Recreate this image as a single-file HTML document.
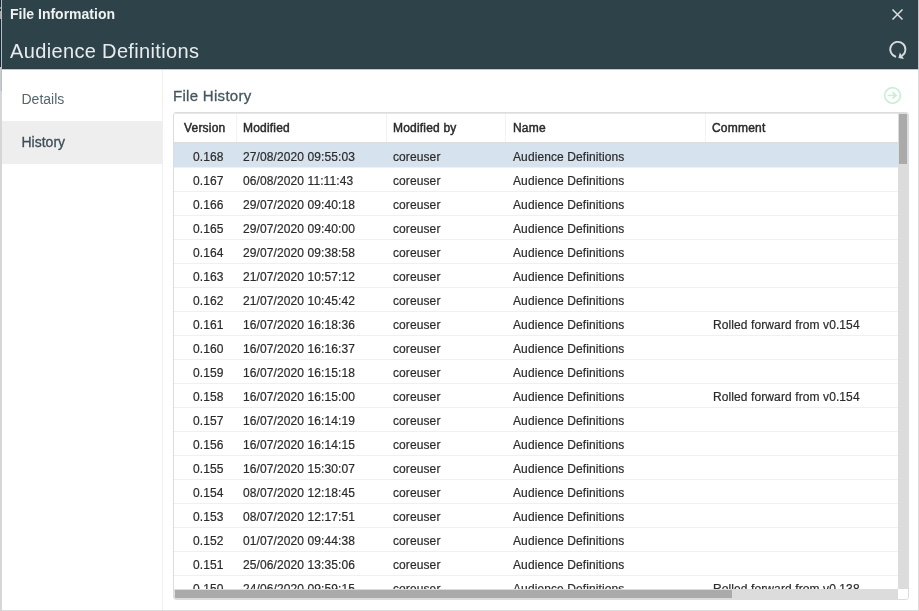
<!DOCTYPE html>
<html><head><meta charset="utf-8">
<style>
*{box-sizing:border-box;margin:0;padding:0}
html,body{width:919px;height:611px;overflow:hidden;background:#fff;font-family:"Liberation Sans",sans-serif}
#dlg{will-change:transform}
#bgcol{position:absolute;left:0;top:0;width:2px;height:611px;background:#d6d6d6}
#bgcol .a{position:absolute;left:0;top:0;width:1px;height:67px;background:#1c2b33}
#bgcol .p{position:absolute;left:0;top:11px;width:1px;height:8px;background:#a0a6a9}
#bgcol .q{position:absolute;left:0;top:7px;width:1px;height:2px;background:#8c9498}
#bgcol .b{position:absolute;left:0;top:67px;width:1px;height:24px;background:#c6ccd2}
#rb{position:absolute;left:918px;top:0;width:1px;height:70px;background:#c2c7ca}
#bgcol .c{position:absolute;left:1px;top:0;width:1px;height:91px;background:#b9bec1}
#dlg{position:absolute;left:1px;top:0;width:918px;height:611px;border:1px solid #dcdcdc;border-top:0;border-left-color:transparent;background:#fff}
#hdr{position:absolute;left:0;top:0;width:916px;height:69px;background:#2e424a;border-bottom:1px solid #2a3c44}
#hline{position:absolute;left:0;top:69px;width:916px;height:1px;background:#c4cacd}
#t1{position:absolute;left:8px;top:6px;font-size:14px;font-weight:bold;color:#f0f2f2;white-space:nowrap}
#t2{position:absolute;left:8px;top:40px;font-size:20px;color:#e8ecee;white-space:nowrap;letter-spacing:0.35px}
#side{position:absolute;left:0;top:70px;width:161px;height:540px;border-right:1px solid #f0f0f0}
.nav{position:absolute;left:0;width:160px;height:43px;font-size:14px;color:#56666e;padding-left:19.5px;line-height:43px}
#nav1{top:8px}
#nav2{top:51px;background:#eeeeee;color:#3d4e57;-webkit-text-stroke:0.3px #3d4e57}
#fh{position:absolute;left:171px;top:87px;font-size:15px;color:#46575e;white-space:nowrap;letter-spacing:0.3px;-webkit-text-stroke:0.3px #46575e}
#tbl{position:absolute;left:171px;top:112px;width:736px;height:488px;border:1px solid #dcdcdc;border-radius:3px;overflow:hidden;background:#fff}
#th{position:absolute;left:0;top:0;width:724px;height:31px;border-top:1px solid #e6e6e6;border-bottom:2px solid #dedede}
.hc{position:absolute;top:0;height:28px;line-height:29px;font-size:12px;color:#2a2a2a;-webkit-text-stroke:0.45px #2a2a2a;letter-spacing:0.2px;padding-left:6px;border-left:1px solid #f2f2f2;white-space:nowrap}
.row{position:absolute;left:0;width:724px;height:24px;border-bottom:1px solid #f0f0f0;font-size:12px;color:#2b2b2b;letter-spacing:0.1px;-webkit-text-stroke:0.2px #2b2b2b}
.row.sel{background:#d6e3ee}
.c{position:absolute;top:2px;line-height:23px;white-space:nowrap}
#vs{position:absolute;left:724px;top:0;width:10px;height:476px;background:#dcdcdc}
#vt{position:absolute;left:1px;top:1px;width:8px;height:50px;background:#aaaaaa}
#hs{position:absolute;left:0;top:476px;width:724px;height:10px;background:#dcdcdc}
#ht{position:absolute;left:1px;top:1px;width:557px;height:8px;background:#aaaaaa}
#corner{position:absolute;left:724px;top:476px;width:10px;height:10px;background:#fff}
svg{position:absolute}
.cv{left:19px}.cd{left:69px}.cu{left:219px}.cn{left:339px}.cc{left:539px}
</style></head><body>
<div id="dlg">
 <div id="hdr">
  <div id="t1">File Information</div>
  <div id="t2">Audience Definitions</div>
  <svg style="left:889px;top:8px" width="13" height="13" viewBox="0 0 13 13"><path d="M1.5 1.5L11.5 11.5M11.5 1.5L1.5 11.5" stroke="#dadfe1" stroke-width="1.5" fill="none"/></svg>
  <svg style="left:882px;top:38px" width="24" height="24" viewBox="-0.5 0 24 24"><path d="M11.6 18.8A7.6 7.6 0 1 1 17.1 18.0" stroke="#d8dcde" stroke-width="1.8" fill="none"/><path d="M13.9 20.0L15.4 14.6L19.4 20.9Z" fill="#d8dcde"/></svg>
 </div>
 <div id="hline"></div>
 <div id="side">
  <div class="nav" id="nav1">Details</div>
  <div class="nav" id="nav2">History</div>
 </div>
 <div id="fh">File History</div>
 <svg style="left:880px;top:84px" width="22" height="22" viewBox="0 0 22 22"><circle cx="10.5" cy="11.4" r="7.8" stroke="#c9eed7" stroke-width="1.6" fill="none"/><path d="M5.7 11.4H13.2" stroke="#c9eed7" stroke-width="1.6"/><path d="M10.6 8.1L13.9 11.4L10.6 14.7" stroke="#c9eed7" stroke-width="1.8" fill="none"/></svg>
 <div id="tbl">
  <div id="th">
   <div class="hc" style="left:0;width:62px;border-left:0;padding-left:10px">Version</div>
   <div class="hc" style="left:62px;width:150px">Modified</div>
   <div class="hc" style="left:212px;width:120px">Modified by</div>
   <div class="hc" style="left:331px;width:200px;padding-left:7px">Name</div>
   <div class="hc" style="left:531px;width:193px">Comment</div>
  </div>
  <div id="rows">
  <div class="row sel" style="top:31px"><span class="c cv">0.168</span><span class="c cd">27/08/2020 09:55:03</span><span class="c cu">coreuser</span><span class="c cn">Audience Definitions</span></div>
  <div class="row" style="top:55px"><span class="c cv">0.167</span><span class="c cd">06/08/2020 11:11:43</span><span class="c cu">coreuser</span><span class="c cn">Audience Definitions</span></div>
  <div class="row" style="top:79px"><span class="c cv">0.166</span><span class="c cd">29/07/2020 09:40:18</span><span class="c cu">coreuser</span><span class="c cn">Audience Definitions</span></div>
  <div class="row" style="top:103px"><span class="c cv">0.165</span><span class="c cd">29/07/2020 09:40:00</span><span class="c cu">coreuser</span><span class="c cn">Audience Definitions</span></div>
  <div class="row" style="top:127px"><span class="c cv">0.164</span><span class="c cd">29/07/2020 09:38:58</span><span class="c cu">coreuser</span><span class="c cn">Audience Definitions</span></div>
  <div class="row" style="top:151px"><span class="c cv">0.163</span><span class="c cd">21/07/2020 10:57:12</span><span class="c cu">coreuser</span><span class="c cn">Audience Definitions</span></div>
  <div class="row" style="top:175px"><span class="c cv">0.162</span><span class="c cd">21/07/2020 10:45:42</span><span class="c cu">coreuser</span><span class="c cn">Audience Definitions</span></div>
  <div class="row" style="top:199px"><span class="c cv">0.161</span><span class="c cd">16/07/2020 16:18:36</span><span class="c cu">coreuser</span><span class="c cn">Audience Definitions</span><span class="c cc">Rolled forward from v0.154</span></div>
  <div class="row" style="top:223px"><span class="c cv">0.160</span><span class="c cd">16/07/2020 16:16:37</span><span class="c cu">coreuser</span><span class="c cn">Audience Definitions</span></div>
  <div class="row" style="top:247px"><span class="c cv">0.159</span><span class="c cd">16/07/2020 16:15:18</span><span class="c cu">coreuser</span><span class="c cn">Audience Definitions</span></div>
  <div class="row" style="top:271px"><span class="c cv">0.158</span><span class="c cd">16/07/2020 16:15:00</span><span class="c cu">coreuser</span><span class="c cn">Audience Definitions</span><span class="c cc">Rolled forward from v0.154</span></div>
  <div class="row" style="top:295px"><span class="c cv">0.157</span><span class="c cd">16/07/2020 16:14:19</span><span class="c cu">coreuser</span><span class="c cn">Audience Definitions</span></div>
  <div class="row" style="top:319px"><span class="c cv">0.156</span><span class="c cd">16/07/2020 16:14:15</span><span class="c cu">coreuser</span><span class="c cn">Audience Definitions</span></div>
  <div class="row" style="top:343px"><span class="c cv">0.155</span><span class="c cd">16/07/2020 15:30:07</span><span class="c cu">coreuser</span><span class="c cn">Audience Definitions</span></div>
  <div class="row" style="top:367px"><span class="c cv">0.154</span><span class="c cd">08/07/2020 12:18:45</span><span class="c cu">coreuser</span><span class="c cn">Audience Definitions</span></div>
  <div class="row" style="top:391px"><span class="c cv">0.153</span><span class="c cd">08/07/2020 12:17:51</span><span class="c cu">coreuser</span><span class="c cn">Audience Definitions</span></div>
  <div class="row" style="top:415px"><span class="c cv">0.152</span><span class="c cd">01/07/2020 09:44:38</span><span class="c cu">coreuser</span><span class="c cn">Audience Definitions</span></div>
  <div class="row" style="top:439px"><span class="c cv">0.151</span><span class="c cd">25/06/2020 13:35:06</span><span class="c cu">coreuser</span><span class="c cn">Audience Definitions</span></div>
  <div class="row" style="top:463px"><span class="c cv">0.150</span><span class="c cd">24/06/2020 09:59:15</span><span class="c cu">coreuser</span><span class="c cn">Audience Definitions</span><span class="c cc">Rolled forward from v0.138</span></div>
  </div><!--rows-->
  <div id="vs"><div id="vt"></div></div>
  <div id="hs"><div id="ht"></div></div>
  <div id="corner"></div>
 </div>
</div>
<div id="rb"></div>
<div id="bgcol"><div class="a"></div><div class="p"></div><div class="q"></div><div class="b"></div><div class="c"></div></div>
</body></html>
